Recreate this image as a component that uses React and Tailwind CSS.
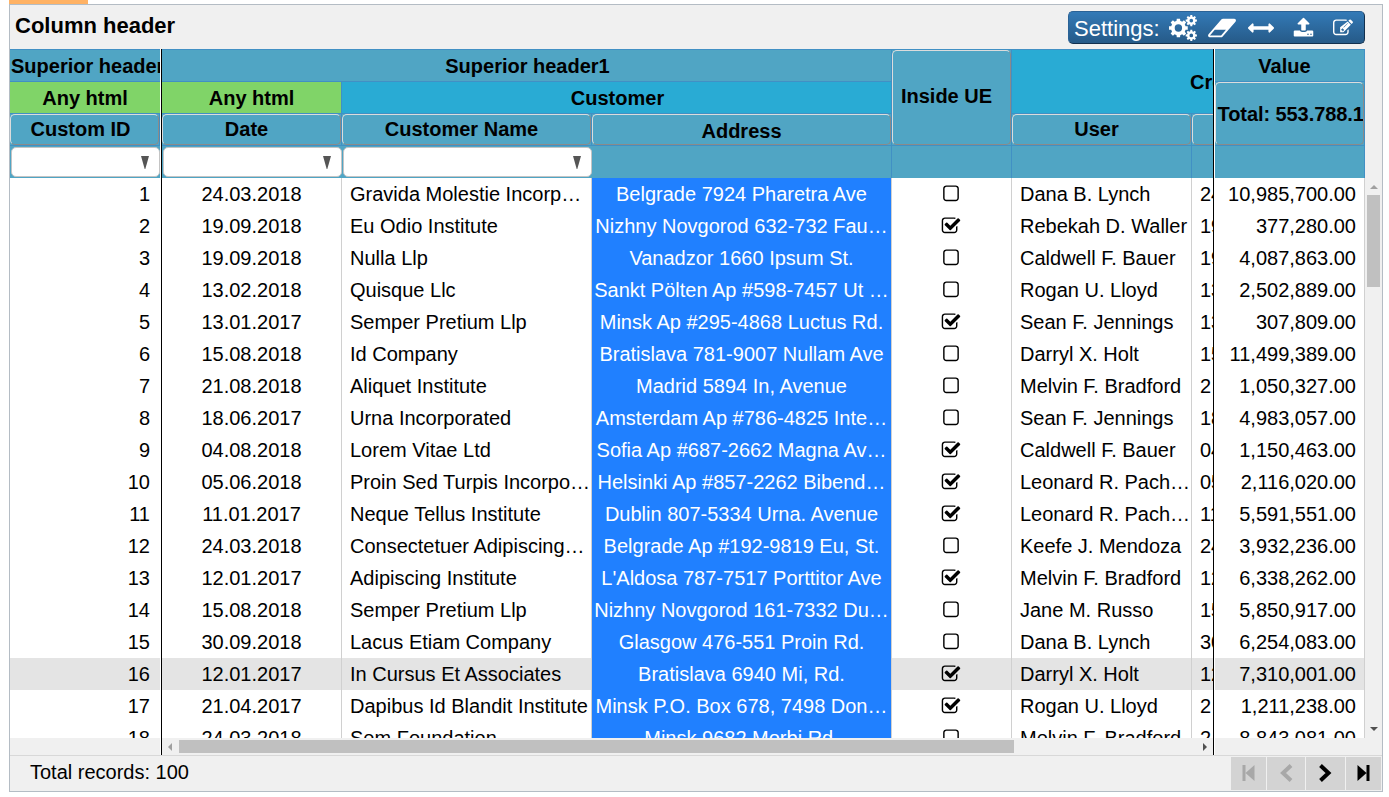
import React from "react";

const ROWS = [
  ["1", "24.03.2018", "Gravida Molestie Incorp…", "Belgrade 7924 Pharetra Ave", 0, "Dana B. Lynch", "24", "10,985,700.00"],
  ["2", "19.09.2018", "Eu Odio Institute", "Nizhny Novgorod 632-732 Fau…", 1, "Rebekah D. Waller", "19", "377,280.00"],
  ["3", "19.09.2018", "Nulla Llp", "Vanadzor 1660 Ipsum St.", 0, "Caldwell F. Bauer", "19", "4,087,863.00"],
  ["4", "13.02.2018", "Quisque Llc", "Sankt Pölten Ap #598-7457 Ut …", 0, "Rogan U. Lloyd", "13", "2,502,889.00"],
  ["5", "13.01.2017", "Semper Pretium Llp", "Minsk Ap #295-4868 Luctus Rd.", 1, "Sean F. Jennings", "13", "307,809.00"],
  ["6", "15.08.2018", "Id Company", "Bratislava 781-9007 Nullam Ave", 0, "Darryl X. Holt", "15", "11,499,389.00"],
  ["7", "21.08.2018", "Aliquet Institute", "Madrid 5894 In, Avenue", 0, "Melvin F. Bradford", "2", "1,050,327.00"],
  ["8", "18.06.2017", "Urna Incorporated", "Amsterdam Ap #786-4825 Inte…", 0, "Sean F. Jennings", "18", "4,983,057.00"],
  ["9", "04.08.2018", "Lorem Vitae Ltd", "Sofia Ap #687-2662 Magna Av…", 1, "Caldwell F. Bauer", "04", "1,150,463.00"],
  ["10", "05.06.2018", "Proin Sed Turpis Incorpo…", "Helsinki Ap #857-2262 Bibend…", 1, "Leonard R. Pach…", "05", "2,116,020.00"],
  ["11", "11.01.2017", "Neque Tellus Institute", "Dublin 807-5334 Urna. Avenue", 1, "Leonard R. Pach…", "11", "5,591,551.00"],
  ["12", "24.03.2018", "Consectetuer Adipiscing…", "Belgrade Ap #192-9819 Eu, St.", 0, "Keefe J. Mendoza", "24", "3,932,236.00"],
  ["13", "12.01.2017", "Adipiscing Institute", "L'Aldosa 787-7517 Porttitor Ave", 1, "Melvin F. Bradford", "12", "6,338,262.00"],
  ["14", "15.08.2018", "Semper Pretium Llp", "Nizhny Novgorod 161-7332 Du…", 0, "Jane M. Russo", "15", "5,850,917.00"],
  ["15", "30.09.2018", "Lacus Etiam Company", "Glasgow 476-551 Proin Rd.", 0, "Dana B. Lynch", "30", "6,254,083.00"],
  ["16", "12.01.2017", "In Cursus Et Associates", "Bratislava 6940 Mi, Rd.", 1, "Darryl X. Holt", "12", "7,310,001.00"],
  ["17", "21.04.2017", "Dapibus Id Blandit Institute", "Minsk P.O. Box 678, 7498 Don…", 1, "Rogan U. Lloyd", "2", "1,211,238.00"],
  ["18", "24.03.2018", "Sem Foundation", "Minsk 9682 Morbi Rd.", 0, "Melvin F. Bradford", "2", "8,843,081.00"],
];

const rowBg = (id) => (id === "16" ? "bg-[#e4e4e4]" : "bg-white");

function Glyph({ d, w = 1792, className }) {
  return (
    <svg viewBox={`0 0 ${w} 1792`} className={`shrink-0 ${className}`} fill="currentColor">
      <path d={d} />
    </svg>
  );
}

const SQUARE =
  "M1312 256H480q-66 0-113 47t-47 113v832q0 66 47 113t113 47h832q66 0 113-47t47-113V416q0-66-47-113t-113-47zm288 160v832q0 119-84.500 203.500T1312 1536H480q-119 0-203.500-84.500T192 1248V416q0-119 84.500-203.500T480 128h832q119 0 203.500 84.500T1600 416z";
const CHECKED =
  "M1472 930v318q0 119-84.500 203.500T1184 1536H352q-119 0-203.500-84.500T64 1248V416q0-119 84.500-203.500T352 128h832q63 0 117 25 15 7 18 23 3 17-9 29l-49 49q-10 10-23 10-3 0-9-2-23-6-45-6H352q-66 0-113 47t-47 113v832q0 66 47 113t113 47h832q66 0 113-47t47-113v-254q0-13 9-22l64-64q10-10 23-10 6 0 12 3 20 8 20 29zm231-489l-814 814q-24 24-57 24t-57-24L345 825q-24-24-24-57t24-57l110-110q24-24 57-24t57 24l263 263 647-647q24-24 57-24t57 24l110 110q24 24 24 57t-24 57z";
const ERASER =
  "M896 1408l336-384H464l-336 384h768zm1013-1077q15 34 9.500 71.500T1888 468L992 1492q-38 44-96 44H128q-38 0-69.500-20.500T11 1461q-15-34-9.500-71.500T32 1324L928 300q38-44 96-44h768q38 0 69.500 20.500T1909 331z";
const ARROWS =
  "M1792 896q0 26-19 45l-256 256q-19 19-45 19t-45-19-19-45v-128H384v128q0 26-19 45t-45 19-45-19L19 941Q0 922 0 896t19-45l256-256q19-19 45-19t45 19 19 45v128h1024V640q0-26 19-45t45-19 45 19l256 256q19 19 19 45z";
const UPLOAD =
  "M1344 1472q0-26-19-45t-45-19-45 19-19 45 19 45 45 19 45-19 19-45zm256 0q0-26-19-45t-45-19-45 19-19 45 19 45 45 19 45-19 19-45zm128-224v320q0 40-28 68t-68 28H160q-40 0-68-28t-28-68v-320q0-40 28-68t68-28h427q21 56 70.500 92t110.500 36h256q61 0 110.500-36t70.500-92h427q40 0 68 28t28 68zm-325-648q-17 40-59 40h-256v448q0 26-19 45t-45 19H768q-26 0-45-19t-19-45V640H448q-42 0-59-40-17-39 14-69l448-448q18-19 45-19t45 19l448 448q31 30 14 69z";
const PENCIL =
  "M888 1184l116-116-152-152-116 116v56h96v96h56zm440-720q-16-16-33 1L945 815q-17 17-1 33t33-1l350-350q17-17 1-33zm80 594v190q0 119-84.500 203.500T1120 1536H288q-119 0-203.500-84.500T0 1248V416q0-119 84.500-203.500T288 128h832q63 0 117 25 15 7 18 23 3 17-9 29l-49 49q-14 14-32 8-23-6-45-6H288q-66 0-113 47t-47 113v832q0 66 47 113t113 47h832q66 0 113-47t47-113v-126q0-13 9-22l64-64q15-15 35-7t20 29zm-96-738l288 288-672 672H640V832zm444 132l-92 92-288-288 92-92q28-28 68-28t68 28l152 152q28 28 28 68t-28 68z";

/* A toothed wheel as a ring of wedges around a hollow disc. */
function gear(cx, cy, r, inner, hole, teeth) {
  const pts = [];
  const step = (Math.PI * 2) / teeth;
  for (let i = 0; i < teeth; i++) {
    const a = i * step;
    for (const [o, rad] of [[-0.32, inner], [-0.22, r], [0.22, r], [0.32, inner]]) {
      pts.push(`${(cx + rad * Math.cos(a + o * step)).toFixed(2)} ${(cy + rad * Math.sin(a + o * step)).toFixed(2)}`);
    }
  }
  return `M${pts.join("L")}Z M${cx - hole} ${cy}a${hole} ${hole} 0 1 0 ${hole * 2} 0a${hole} ${hole} 0 1 0 ${-hole * 2} 0Z`;
}

function Cogs() {
  return (
    <svg viewBox="0 0 28 26" className="h-[26px] w-[28px] shrink-0" fill="currentColor" fillRule="evenodd">
      <path d={gear(9.4, 13, 9.5, 7.4, 3.7, 8)} />
      <path d={gear(22.3, 5.6, 5.7, 4.3, 1.85, 8)} />
      <path d={gear(22.3, 20.4, 5.7, 4.3, 1.85, 8)} />
    </svg>
  );
}

function Button({ children, className = "" }) {
  return (
    <div className={`flex w-full items-center justify-center overflow-hidden rounded-[5px] border border-t-[#dcdcdc] border-r-[#8a8a8a] border-b-[#8a8a8a] border-l-[#dcdcdc] whitespace-nowrap ${className}`}>
      {children}
    </div>
  );
}

/* Header cell: hairlines along its right and lower sides. */
function Cell({ children, bg = "bg-[#50a5c4]", className = "" }) {
  return (
    <div className={`flex overflow-hidden border-r border-b border-[#4190c4] whitespace-nowrap ${bg} ${className}`}>
      {children}
    </div>
  );
}

function Filter({ className = "" }) {
  return (
    <div className={`flex h-[32px] bg-[#50a5c4] py-px pr-[0.5px] pl-px ${className}`}>
      <div className="flex flex-1 items-center justify-end rounded-[5px] border border-[#c4c4c4] bg-white pr-[10px]">
        <svg viewBox="0 0 8 13" className="h-[13px] w-[8px]" fill="#555">
          <path d="M0 0H8L4.300 13H3.700Z" />
        </svg>
      </div>
    </div>
  );
}

function Left() {
  return (
    <section className="flex w-[151px] shrink-0 flex-col overflow-hidden bg-white">
      <div className="w-[150px] shrink-0 border-t border-[#4190c4] font-bold">
        <Cell className="h-[32px] items-center border-r-0 pl-px">Superior header1</Cell>
        <Cell bg="bg-[#80d468]" className="h-[32px] items-center justify-center border-r-0">Any html</Cell>
        <Cell className="h-[32px]"><Button className="pr-[8px] pb-[2px]">Custom ID</Button></Cell>
        <Filter />
      </div>
      <div className="h-[560px] shrink-0 overflow-hidden">
        {ROWS.map((r) => (
          <div key={r[0]} className={`flex h-[32px] w-[150px] items-center justify-end pr-[10px] ${rowBg(r[0])}`}>{r[0]}</div>
        ))}
      </div>
      <div className="h-[17px] w-[150px] bg-[#f0f0f0]" />
    </section>
  );
}

function Center() {
  const cell = "flex shrink-0 items-center border-r border-[#d0d0d0]";
  return (
    <section className="flex w-[1053px] shrink-0 flex-col overflow-hidden border-x border-black">
      <div className="flex h-[129px] w-[1210px] shrink-0 border-t border-[#4190c4] font-bold">
        <div className="w-[730px] shrink-0">
          <Cell className="h-[32px] items-center justify-center pl-[2px]">Superior header1</Cell>
          <div className="flex">
            <Cell bg="bg-[#80d468]" className="h-[32px] w-[180px] items-center justify-center">Any html</Cell>
            <Cell bg="bg-[#29abd4]" className="h-[32px] w-[550px] items-center justify-center pl-[2px]">Customer</Cell>
          </div>
          <div className="flex">
            <Cell className="h-[32px] w-[180px]"><Button className="pr-[10px] pb-[2px]">Date</Button></Cell>
            <Cell className="h-[32px] w-[250px]"><Button className="pr-[10px] pb-[2px]">Customer Name</Button></Cell>
            <Cell className="h-[32px] w-[300px]"><Button className="pt-[3px]">Address</Button></Cell>
          </div>
          <div className="flex">
            <Filter className="w-[180px]" />
            <Filter className="w-[250px]" />
            <Cell className="h-[32px] w-[300px] border-b-0" />
          </div>
        </div>
        <div className="w-[120px] shrink-0">
          <Cell className="h-[96px]"><Button className="pr-[10px] pb-[4px]">Inside UE</Button></Cell>
          <Cell className="h-[32px] border-b-0" />
        </div>
        <div className="w-[360px] shrink-0">
          <Cell bg="bg-[#29abd4]" className="h-[64px] items-center pl-[178px]">Created</Cell>
          <div className="flex">
            <Cell className="h-[32px] w-[180px]"><Button className="pr-[10px] pb-[2px]">User</Button></Cell>
            <Cell className="h-[32px] w-[180px]"><Button>Date</Button></Cell>
          </div>
          <div className="flex">
            <Cell className="h-[32px] w-[180px] border-b-0" />
            <Cell className="h-[32px] w-[180px] border-b-0" />
          </div>
        </div>
      </div>
      <div className="h-[560px] shrink-0 overflow-hidden">
        {ROWS.map((r) => (
          <div key={r[0]} className={`flex h-[32px] w-[1210px] ${rowBg(r[0])}`}>
            <div className={`${cell} w-[180px] justify-center`}>{r[1]}</div>
            <div className={`${cell} w-[250px] pl-[8px]`}><span className="whitespace-nowrap">{r[2]}</span></div>
            <div className={`${cell} w-[300px] justify-center bg-[#2080ff] text-white`}><span className="whitespace-nowrap">{r[3]}</span></div>
            <div className={`${cell} w-[120px] justify-center`}>
              <Glyph d={r[4] ? CHECKED : SQUARE} className="mr-[1px] mb-[1px] h-[20px] w-[20px]" />
            </div>
            <div className={`${cell} w-[180px] pl-[8px]`}><span className="whitespace-nowrap">{r[5]}</span></div>
            <div className={`${cell} w-[150px] pl-[8px]`}>{r[6]}</div>
          </div>
        ))}
      </div>
      <div className="flex h-[17px] items-center bg-[#f0f0f0]">
        <svg viewBox="0 0 17 17" className="h-[17px] w-[17px]" fill="#a0a0a0"><path d="M10 5v8L6 9z" /></svg>
        <div className="h-[13px] w-[835px] bg-[#c0c0c0]" />
        <svg viewBox="0 0 17 17" className="ml-auto h-[17px] w-[17px]" fill="#505050"><path d="M7 5v8L11 9z" /></svg>
      </div>
    </section>
  );
}

function Right() {
  return (
    <section className="flex w-[151px] shrink-0 flex-col overflow-hidden bg-white pl-px">
      <div className="h-[129px] shrink-0 border-t border-[#4190c4] font-bold">
        <Cell className="h-[32px] items-center justify-center pr-[10px]">Value</Cell>
        <Cell className="h-[64px]"><Button className="!justify-start pl-[1.5px] tracking-[-0.07px]">Total: 553.788.1</Button></Cell>
        <Cell className="h-[32px] border-b-0" />
      </div>
      <div className="h-[560px] shrink-0 overflow-hidden">
        {ROWS.map((r) => (
          <div key={r[0]} className={`flex h-[32px] items-center justify-end border-r border-[#d0d0d0] pr-[8px] ${rowBg(r[0])}`}>{r[7]}</div>
        ))}
      </div>
      <div className="h-[17px] bg-[#f0f0f0]" />
    </section>
  );
}

export default function App() {
  return (
    <div className="h-[797px] w-[1389px] overflow-hidden bg-white pl-[9px] font-['Liberation_Sans',Arial,sans-serif] text-[20px] leading-[32px] text-black">
      <div className="h-[4px] w-[79px] bg-[#ffb264]" />
      <main className="flex h-[788px] w-[1374px] flex-col border border-[#b4bcc4] bg-[#f0f0f0]">
        <header className="flex h-[44px] shrink-0 items-start justify-between pr-[17px] pl-[5px]">
          <h1 className="pt-[5px] text-[22px] font-bold">Column header</h1>
          <div className="mt-[6px] flex h-[33px] w-[297px] items-center rounded-[5px] border border-t-[#2a6296] border-r-[#12304e] border-b-[#12304e] border-l-[#2a6296] bg-gradient-to-b from-[#337ab7] to-[#265a88] pl-[5px] text-[22px] text-white">
            <span className="w-[95px] pt-[2px]">Settings:</span>
            <Cogs />
            <Glyph d={ERASER} w={1920} className="ml-[11px] h-[26px] w-[28px]" />
            <Glyph d={ARROWS} className="ml-[12px] h-[26px] w-[26px]" />
            <Glyph d={UPLOAD} className="ml-[19px] h-[21px] w-[21px]" />
            <Glyph d={PENCIL} className="ml-[19px] h-[20px] w-[20px]" />
          </div>
        </header>
        <div className="flex h-[706px] shrink-0">
          <Left />
          <Center />
          <Right />
          <div className="flex w-[17px] flex-col items-center pt-[129px]">
            <svg viewBox="0 0 17 17" className="h-[17px] w-[17px]" fill="#a0a0a0"><path d="M5 11h8L9 7z" /></svg>
            <div className="h-[92px] w-[13px] bg-[#c0c0c0]" />
            <svg viewBox="0 0 17 17" className="mt-auto mb-[17px] h-[17px] w-[17px]" fill="#505050"><path d="M5 6h8L9 10z" /></svg>
          </div>
        </div>
        <footer className="flex flex-1 items-start justify-between border-t border-[#d8d8d8] pl-[20px]">
          <span>Total records: 100</span>
          <div className="flex gap-px pt-[1px] pr-[1px] text-black">
            <div className="flex h-[33px] w-[35px] items-center justify-center bg-[#d3d3d3] pb-[2px] text-[#a8a8a8]">
              <svg viewBox="0 0 14 18" className="h-[18px] w-[14px]" fill="currentColor"><path d="M0.500 1h3v16h-3zM12.500 1v16L3.500 9z" /></svg>
            </div>
            <div className="flex h-[33px] w-[38px] items-center justify-center bg-[#d3d3d3] pb-[2px] text-[#a8a8a8]">
              <svg viewBox="0 0 14 18" className="h-[18px] w-[14px]" fill="none" stroke="currentColor" strokeWidth="4"><path d="M12 1.500L4 9l8 7.500" /></svg>
            </div>
            <div className="flex h-[33px] w-[39px] items-center justify-center bg-[#d3d3d3] pb-[2px]">
              <svg viewBox="0 0 14 18" className="h-[18px] w-[14px]" fill="none" stroke="currentColor" strokeWidth="4"><path d="M1.500 1.500L9.500 9l-8 7.500" /></svg>
            </div>
            <div className="flex h-[33px] w-[35px] items-center justify-center bg-[#d3d3d3] pb-[2px]">
              <svg viewBox="0 0 14 18" className="h-[18px] w-[14px]" fill="currentColor"><path d="M12.500 1h-3v16h3zM0.500 1v16L9.500 9z" /></svg>
            </div>
          </div>
        </footer>
      </main>
    </div>
  );
}
